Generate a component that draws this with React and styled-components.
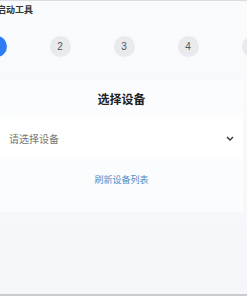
import React from "react";
import styled, { createGlobalStyle } from "styled-components";

const GlobalStyle = createGlobalStyle`
  html, body {
    margin: 0;
    padding: 0;
    background: #f4f6f9;
    font-family: "Noto Sans CJK SC", "Noto Sans", sans-serif;
    overflow: hidden;
  }
`;

const steps = [1, 2, 3, 4, 5];

export default function App() {
  return (
    <>
      <GlobalStyle />
      <Frame>
        <TitleBar>启动工具</TitleBar>
        <StepsRow>
          {steps.map((n) => (
            <StepItem key={n}>
              <StepCircle active={n === 1}>{n}</StepCircle>
            </StepItem>
          ))}
        </StepsRow>
        <Card>
          <Heading>选择设备</Heading>
          <SelectBox>
            <Placeholder>请选择设备</Placeholder>
            <svg width="8" height="5" viewBox="0 0 8 5" fill="none">
              <path d="M1 1l3 3 3-3" stroke="#333" strokeWidth="1.4" />
            </svg>
          </SelectBox>
          <RefreshLink>刷新设备列表</RefreshLink>
        </Card>
      </Frame>
    </>
  );
}

const Frame = styled.div`
  height: 296px;
  box-sizing: border-box;
  border-top: 1px solid #dcdde0;
  border-bottom: 2px solid #c9cacd;
  display: flex;
  flex-direction: column;
  background: linear-gradient(#fafbfd, #f4f6f9);
  overflow: hidden;
`;

const TitleBar = styled.div`
  margin-left: -3px;
  padding-top: 3px;
  height: 16px;
  font-size: 9px;
  font-weight: 700;
  color: #333;
  line-height: 12px;
`;

const StepsRow = styled.div`
  display: flex;
  margin-left: -36px;
  padding-top: 16px;
  height: 38px;
`;

const StepItem = styled.div`
  flex: 0 0 64px;
  display: flex;
  justify-content: center;
`;

const StepCircle = styled.div`
  width: 21px;
  height: 21px;
  border-radius: 50%;
  background: ${(p) => (p.active ? "#2f7df6" : "#e9eaee")};
  color: ${(p) => (p.active ? "#fff" : "#555")};
  font-family: "Liberation Sans", sans-serif;
  font-size: 10px;
  display: flex;
  align-items: center;
  justify-content: center;
`;

const Card = styled.div`
  margin: 7px 4px 0 0;
  padding: 10px 0 26px;
  background: #fbfcfe;
  display: flex;
  flex-direction: column;
  align-items: center;
`;

const Heading = styled.div`
  font-size: 12px;
  font-weight: 700;
  color: #222;
  line-height: 16px;
`;

const SelectBox = styled.div`
  align-self: stretch;
  margin-top: 10px;
  height: 42px;
  box-sizing: border-box;
  padding: 0 9px;
  background: #ffffff;
  border-radius: 4px;
  display: flex;
  align-items: center;
  justify-content: space-between;
`;

const Placeholder = styled.span`
  font-size: 10px;
  color: #777;
`;

const RefreshLink = styled.span`
  margin-top: 15px;
  font-size: 9px;
  color: #4f8cc4;
  line-height: 12px;
  cursor: pointer;
`;
